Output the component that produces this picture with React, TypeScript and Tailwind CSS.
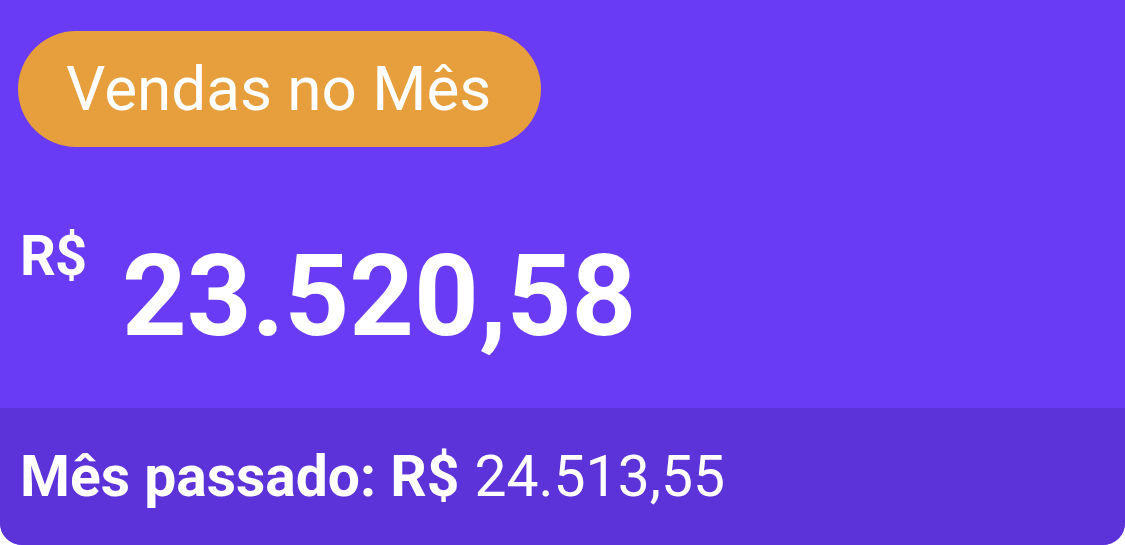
export default function App() {
  return (
    <div className="w-[1125px] h-[545px] bg-white" style={{ fontFamily: "Roboto, 'Noto Sans', sans-serif" }}>
      <div className="w-full h-full flex flex-col overflow-hidden rounded-b-[22px] bg-[#6a3bf5]">
        <div className="h-[408px] flex flex-col pl-[18px] pt-[31px]">
          <div className="self-start h-[116px] rounded-full bg-[#e69f3c] pl-[48px] pr-[50px] flex items-center text-white text-[62px] leading-none">
            Vendas no Mês
          </div>
          <div className="flex items-start mt-[70px] text-white font-bold">
            <span className="text-[56px] leading-none ml-[2px] mt-[11px] tracking-[-1px]">R$</span>
            <span className="text-[113px] leading-none ml-[36px] mt-[23px]">23.520,58</span>
          </div>
        </div>
        <div className="flex-1 bg-[#5c33d9] flex items-center pl-[20px] text-white text-[57px] leading-none">
          <span className="font-bold">Mês passado: R$</span>
          <span className="ml-[15px]">24.513,55</span>
        </div>
      </div>
    </div>
  );
}
